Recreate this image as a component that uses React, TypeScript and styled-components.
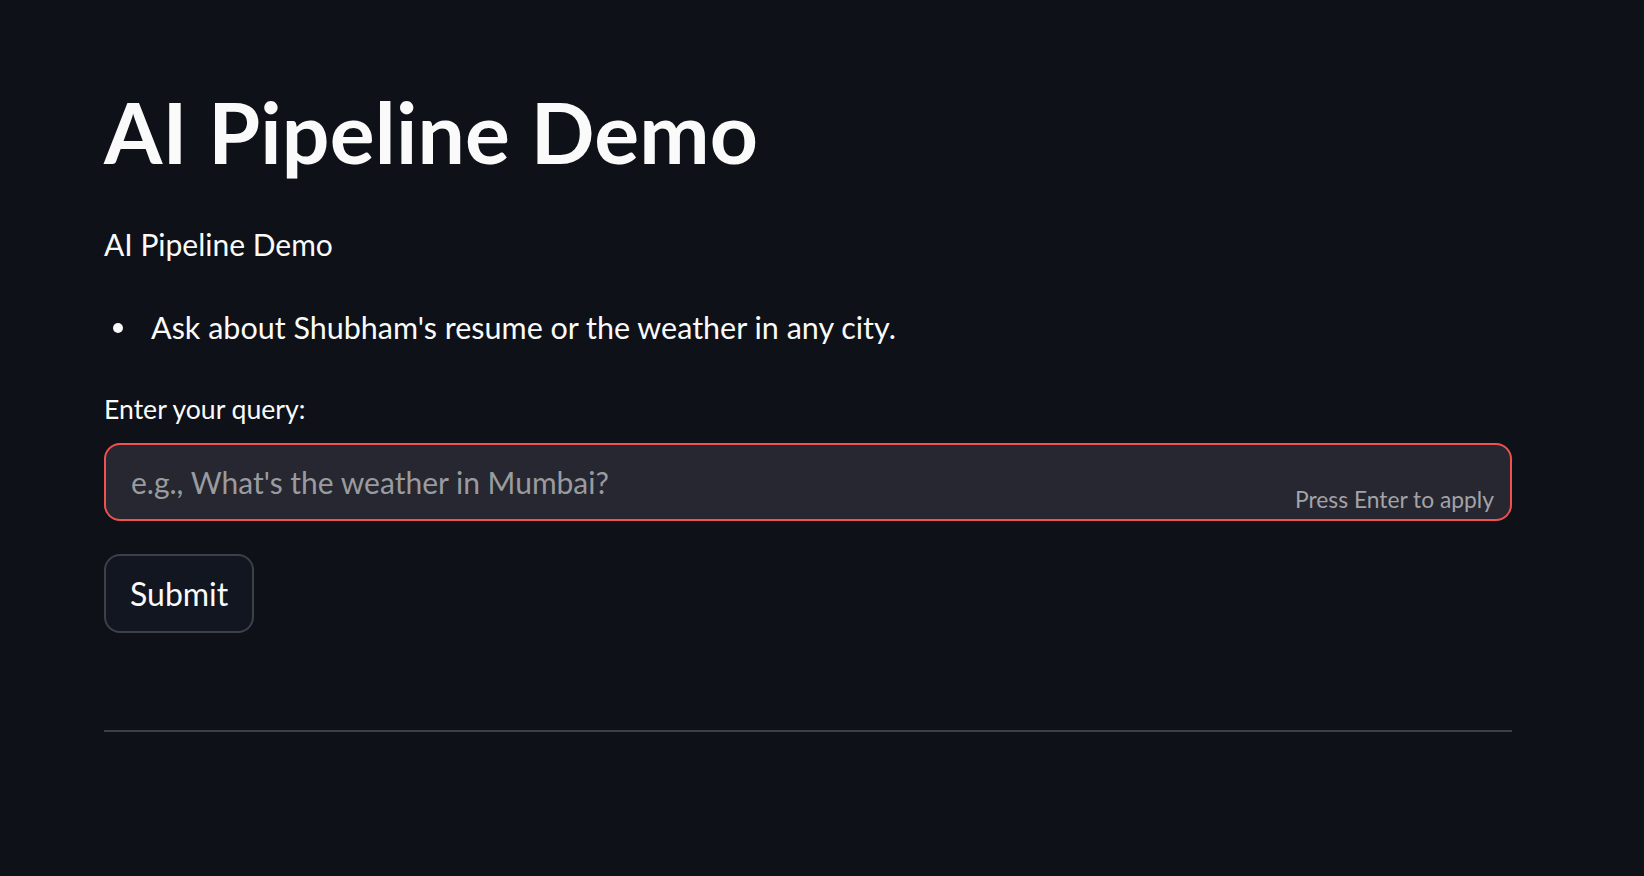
import React from "react";
import styled, { createGlobalStyle } from "styled-components";

const GlobalStyle = createGlobalStyle`
  html, body {
    margin: 0;
    padding: 0;
    background: #0e1117;
  }
  body {
    font-family: Lato, "Liberation Sans", sans-serif;
    color: #fafafa;
  }
  * { box-sizing: border-box; }
`;

const Page = styled.main`
  min-height: 876px;
  background: #0e1117;
  padding: 82px 0 0 104px;
`;

const Block = styled.div`
  width: 1408px;
  display: flex;
  flex-direction: column;
`;

const Title = styled.h1`
  margin: 0;
  font-family: Lato, "Liberation Sans", sans-serif;
  font-weight: 700;
  font-size: 84px;
  line-height: 100px;
  color: #fafafa;
  letter-spacing: 0.2px;
`;

const Paragraph = styled.p`
  margin: 38px 0 0;
  font-size: 30px;
  line-height: 48px;
`;

const List = styled.ul`
  margin: 35px 0 0;
  padding: 0;
  list-style: none;
`;

const Item = styled.li`
  display: flex;
  align-items: center;
  gap: 28px;
  padding-left: 9px;
  font-size: 30.5px;
  line-height: 48px;
  &::before {
    content: "";
    width: 10px;
    height: 10px;
    border-radius: 50%;
    background: #fafafa;
    flex: none;
    margin-top: 2px;
  }
`;

const Label = styled.label`
  margin-top: 38px;
  font-size: 26.6px;
  line-height: 40px;
  display: block;
`;

const InputWrap = styled.div`
  position: relative;
  margin-top: 14px;
  height: 78px;
`;

const Input = styled.input`
  width: 100%;
  height: 78px;
  border: 2px solid #f0524f;
  border-radius: 16px;
  background: #262730;
  color: #fafafa;
  padding: 0 25px;
  font-family: Lato, "Liberation Sans", sans-serif;
  font-size: 30px;
  outline: none;
  &::placeholder { color: #9a9b9f; opacity: 1; }
`;

const Hint = styled.span`
  position: absolute;
  right: 18px;
  bottom: 7px;
  font-size: 22.8px;
  line-height: 30px;
  color: #a3a3a8;
`;

const ButtonRow = styled.div`
  margin-top: 33px;
  display: flex;
`;

const Button = styled.button`
  height: 79px;
  padding: 0 24px;
  border: 2px solid #3d4046;
  border-radius: 16px;
  background: #121620;
  color: #fafafa;
  font-family: Lato, "Liberation Sans", sans-serif;
  font-size: 32px;
  cursor: pointer;
`;

const Divider = styled.hr`
  margin: 97px 0 0;
  border: none;
  height: 2px;
  background: #3d4046;
`;

export default function App() {
  return (
    <>
      <GlobalStyle />
      <Page>
        <Block>
          <Title>AI Pipeline Demo</Title>
          <Paragraph>AI Pipeline Demo</Paragraph>
          <List>
            <Item>Ask about Shubham's resume or the weather in any city.</Item>
          </List>
          <Label htmlFor="q">Enter your query:</Label>
          <InputWrap>
            <Input id="q" placeholder="e.g., What's the weather in Mumbai?" />
            <Hint>Press Enter to apply</Hint>
          </InputWrap>
          <ButtonRow>
            <Button>Submit</Button>
          </ButtonRow>
          <Divider />
        </Block>
      </Page>
    </>
  );
}
